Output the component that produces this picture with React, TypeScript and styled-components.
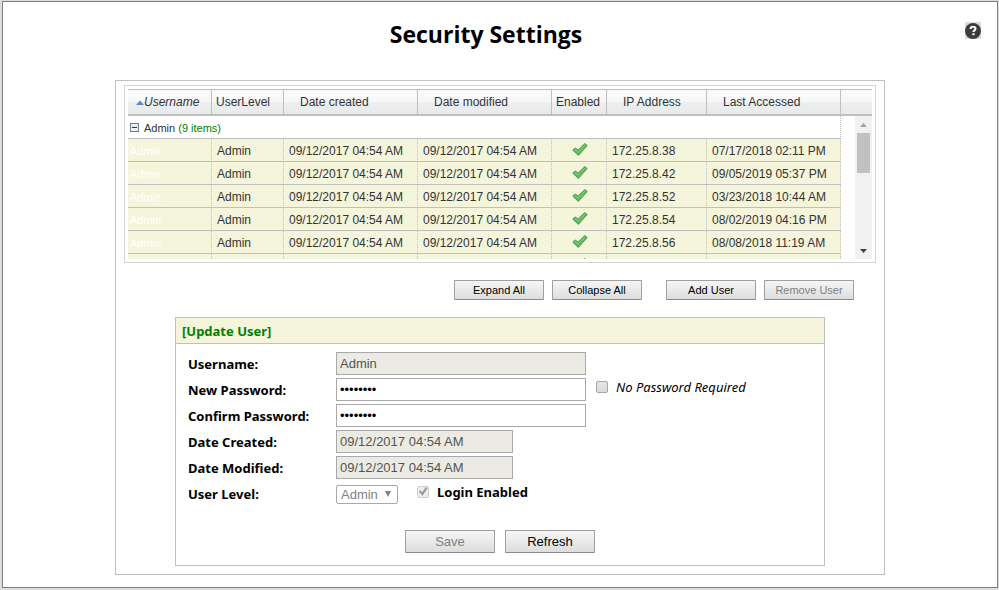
import React, { useState } from "react";
import styled, { createGlobalStyle, css } from "styled-components";

const GlobalStyle = createGlobalStyle`
  *, *::before, *::after { box-sizing: border-box; }
  body {
    margin: 0;
    background: #dddddd;
    color: #000000;
    font-family: "Noto Sans", "Open Sans", sans-serif;
  }
`;

const arial = `"Liberation Sans", Arial, sans-serif`;
const line = "#bfbfbf";

const Page = styled.div`
  padding: 1px 1px 2px 2px;
`;

const Frame = styled.main`
  display: flex;
  flex-direction: column;
  align-items: center;
  padding-bottom: 12px;
  border: 1px solid #7f7f7f;
  background: #ffffff;
`;

const TitleBar = styled.header`
  display: grid;
  grid-template-columns: 1fr auto 1fr;
  align-items: start;
  align-self: stretch;
  height: 78px;
  padding: 20px 16px 0 12px;
`;

const Title = styled.h1`
  grid-column: 2;
  margin: 0 24px 0 0;
  font-size: 23px;
  line-height: 25px;
  font-weight: 700;
  font-family: "Open Sans", "Noto Sans", sans-serif;
`;

const HelpButton = styled.button`
  justify-self: end;
  display: flex;
  padding: 0;
  border: 0;
  background: #dcdcdc;
  cursor: pointer;
`;

const Panel = styled.section`
  display: flex;
  flex-direction: column;
  width: 100%;
  max-width: 770px;
  padding: 4px 8px 8px;
  border: 1px solid ${line};
`;

const GridBox = styled.div`
  padding: 3px;
  border: 1px solid #d3d3d3;
`;

const GridTable = styled.table`
  width: 100%;
  table-layout: fixed;
  border-collapse: separate;
  border-spacing: 0;
  color: #333333;
  font-family: ${arial};
  font-size: 12px;
  line-height: 16px;
`;

const HeadCell = styled.th<{ $inset: number; $sorted?: boolean }>`
  height: 27px;
  padding: 0 0 0 ${(p) => p.$inset}px;
  border-top: 1px solid ${line};
  border-bottom: 2px solid ${line};
  border-right: 1px solid ${line};
  background: linear-gradient(#fafafa 0, #f7f7f8 48%, #edeef0 52%, #e9eaec 100%);
  font-weight: 400;
  font-style: ${(p) => (p.$sorted ? "italic" : "normal")};
  text-align: left;
  white-space: nowrap;
  &:last-child {
    border-right: 0;
  }
`;

const SortArrow = styled.svg`
  vertical-align: 1px;
`;

const GridBody = styled.div`
  display: flex;
  height: 143px;
`;

const Rows = styled.div`
  flex: 1;
  overflow: hidden;
`;

const GroupCell = styled.td`
  height: 23px;
  padding: 1px 2px 0;
  border-right: 1px dotted ${line};
  border-bottom: 1px solid ${line};
  font-size: 11px;
`;

const GroupLabel = styled.span`
  display: flex;
  align-items: center;
  gap: 5px;
`;

const GroupToggle = styled.button`
  display: flex;
  padding: 0;
  border: 0;
  background: none;
`;

const Count = styled.span`
  color: #008000;
`;

const Cell = styled.td<{ $kind?: "name" | "mark" }>`
  height: 23px;
  padding: 1px 0 0 5px;
  border-right: 1px dotted ${line};
  border-bottom: 1px solid ${line};
  background: #f5f5dc;
  white-space: nowrap;
  ${(p) =>
    p.$kind === "name" &&
    css`
      padding-left: 2px;
      color: #ffffff;
      font-size: 11px;
    `}
  ${(p) =>
    p.$kind === "mark" &&
    css`
      padding: 0 0 2px 2px;
      text-align: center;
    `}
`;

const CheckIcon = styled.svg`
  display: block;
  margin: 0 auto;
`;

const ScrollTrack = styled.div`
  display: grid;
  grid-template-rows: 17px 1fr 17px;
  width: 17px;
  background: #f1f1f1;
`;

const ScrollArrow = styled.svg`
  place-self: center;
`;

const ScrollThumb = styled.div`
  width: 13px;
  height: 40px;
  margin: 0 auto;
  background: #c1c1c1;
`;

const Actions = styled.div`
  display: flex;
  justify-content: flex-end;
  gap: 8px;
  margin: 17px 22px;
`;

const ActionGroup = styled.div`
  display: flex;
  gap: 8px;
  & + & {
    margin-left: 16px;
  }
`;

const Button = styled.button<{ $large?: boolean }>`
  width: 90px;
  height: ${(p) => (p.$large ? 23 : 20)}px;
  padding: 0;
  border: 1px solid #a0a0a0;
  border-bottom-color: #8c8c8c;
  border-radius: 1px;
  background: linear-gradient(#f6f6f6, #dddddd);
  color: #000000;
  font-family: ${arial};
  font-size: ${(p) => (p.$large ? 13 : 11)}px;
  &:disabled {
    color: #808080;
  }
`;

const UserForm = styled.form`
  width: 100%;
  max-width: 650px;
  align-self: center;
  border: 1px solid ${line};
`;

const FormTitle = styled.h2`
  margin: 0;
  padding: 2px 6px 0;
  border-bottom: 1px solid ${line};
  background: #f5f5dc;
  color: #008000;
  font-size: 13px;
  font-weight: 700;
  line-height: 23px;
`;

const Fields = styled.div`
  display: flex;
  flex-direction: column;
  gap: 3px;
  padding: 8px 12px 0;
`;

const FieldRow = styled.div`
  display: grid;
  grid-template-columns: 148px auto 1fr;
  grid-template-rows: 23px;
  align-items: center;
`;

const FieldLabel = styled.label`
  padding-top: 1px;
  font-size: 13px;
  font-weight: 700;
  line-height: 18px;
`;

const TextInput = styled.input<{ $short?: boolean }>`
  width: ${(p) => (p.$short ? 177 : 250)}px;
  height: 23px;
  padding: 0 3px 1px;
  border: 1px solid #a9a9a9;
  border-radius: 0;
  background: #ffffff;
  color: #000000;
  font-family: ${arial};
  font-size: 13px;
  &:disabled {
    background: #ebebe4;
    color: #545454;
  }
`;

const SelectBox = styled.span`
  display: grid;
  align-items: center;
  margin-top: 1px;
`;

const Select = styled.select`
  grid-area: 1 / 1;
  width: 62px;
  height: 19px;
  padding: 0 4px;
  appearance: none;
  border: 1px solid #a9a9a9;
  border-radius: 2px;
  background: #ffffff;
  color: #808080;
  font-family: ${arial};
  font-size: 13px;
  opacity: 1;
`;

const SelectArrow = styled.svg`
  grid-area: 1 / 1;
  justify-self: end;
  margin-right: 7px;
  pointer-events: none;
`;

const CheckLabel = styled.label<{ $strong?: boolean }>`
  display: flex;
  align-items: center;
  gap: 8px;
  padding-bottom: ${(p) => (p.$strong ? 4 : 6)}px;
  margin-left: ${(p) => (p.$strong ? 19 : 10)}px;
  font-size: 13px;
  font-weight: ${(p) => (p.$strong ? 700 : 400)};
  font-style: ${(p) => (p.$strong ? "normal" : "italic")};
  line-height: 18px;
`;

const CheckBox = styled.input`
  appearance: none;
  width: 12px;
  height: 12px;
  margin: 0;
  border: 1px solid #a6a6a6;
  border-radius: 2px;
  background: linear-gradient(#e6e6e6, #dadada);
  &:disabled {
    border-color: #cccccc;
    background: #ededed;
  }
  &:checked::before {
    content: "";
    display: block;
    width: 10px;
    height: 10px;
    background: #999999;
    clip-path: polygon(8% 52%, 26% 38%, 42% 58%, 78% 5%, 95% 18%, 46% 92%);
  }
`;

const FormActions = styled.div`
  display: flex;
  justify-content: center;
  gap: 10px;
  padding: 25px 0 12px;
`;

const widths = [84, 72, 134, 134, 55, 100, 134];

const created = "09/12/2017 04:54 AM";

const users = [
  { id: 1, name: "Admin", created, ip: "172.25.8.38", accessed: "07/17/2018 02:11 PM" },
  { id: 2, name: "Admin", created, ip: "172.25.8.42", accessed: "09/05/2019 05:37 PM" },
  { id: 3, name: "Admin", created, ip: "172.25.8.52", accessed: "03/23/2018 10:44 AM" },
  { id: 4, name: "Admin", created, ip: "172.25.8.54", accessed: "08/02/2019 04:16 PM" },
  { id: 5, name: "Admin", created, ip: "172.25.8.56", accessed: "08/08/2018 11:19 AM" },
  { id: 6, name: "", created: "", ip: "", accessed: "" },
];

const Columns = () => (
  <colgroup>
    {widths.map((w, i) => (
      <col key={i} width={w} />
    ))}
    <col />
  </colgroup>
);

const Check = () => (
  <CheckIcon width="16" height="13" viewBox="0 0 16 13" role="img" aria-label="Enabled">
    <path
      d="M.8 7.2 3.1 4.9l3 2.2L12.8.6l2.4 1.9-8.8 9.9z"
      fill="#62bb5e"
      stroke="#4b9c4b"
      strokeWidth="1"
      strokeLinejoin="round"
    />
    <path d="M3 6.4 6.3 8.8 13 2" fill="none" stroke="#84cf7e" strokeWidth="1" />
  </CheckIcon>
);

export default function App() {
  const [password, setPassword] = useState("password");
  const [confirm, setConfirm] = useState("password");

  return (
    <>
      <GlobalStyle />
      <Page>
        <Frame>
          <TitleBar>
            <Title>Security Settings</Title>
            <HelpButton type="button" aria-label="Help">
              <svg width="16" height="17" viewBox="0 0 16 17">
                <circle cx="8" cy="9" r="8" fill="#3c3c3c" />
                <path
                  d="M5.6 7C5.6 5.4 6.6 4.8 8 4.8s2.5.7 2.5 2c0 1.6-2.1 1.6-2.1 3.3"
                  fill="none"
                  stroke="#ffffff"
                  strokeWidth="2"
                />
                <rect x="7.4" y="11.2" width="2.1" height="2" fill="#ffffff" />
              </svg>
            </HelpButton>
          </TitleBar>

          <Panel>
            <GridBox>
              <GridTable>
                <Columns />
                <thead>
                  <tr>
                    <HeadCell $inset={8} $sorted aria-sort="ascending">
                      <SortArrow width="8" height="5" viewBox="0 0 8 5">
                        <path d="M0 5 4 0.5 8 5z" fill="#5b87cf" />
                      </SortArrow>
                      Username
                    </HeadCell>
                    <HeadCell $inset={4}>UserLevel</HeadCell>
                    <HeadCell $inset={16}>Date created</HeadCell>
                    <HeadCell $inset={16}>Date modified</HeadCell>
                    <HeadCell $inset={4}>Enabled</HeadCell>
                    <HeadCell $inset={16}>IP Address</HeadCell>
                    <HeadCell $inset={16}>Last Accessed</HeadCell>
                    <HeadCell as="td" $inset={0} />
                  </tr>
                </thead>
              </GridTable>
              <GridBody>
                <Rows>
                  <GridTable aria-label="Users">
                    <Columns />
                    <tbody>
                      <tr>
                        <GroupCell colSpan={7}>
                          <GroupLabel>
                            <GroupToggle type="button" aria-label="Collapse group">
                              <svg width="9" height="9" viewBox="0 0 9 9">
                                <rect x="0.5" y="0.5" width="8" height="8" fill="#e4f4f8" stroke="#6f7f86" />
                                <path d="M2 4.5h5" stroke="#123a66" />
                              </svg>
                            </GroupToggle>
                            <span>
                              Admin <Count>(9 items)</Count>
                            </span>
                          </GroupLabel>
                        </GroupCell>
                        <td />
                      </tr>
                      {users.map((u) => (
                        <tr key={u.id}>
                          <Cell $kind="name">{u.name}</Cell>
                          <Cell>{u.name}</Cell>
                          <Cell>{u.created}</Cell>
                          <Cell>{u.created}</Cell>
                          <Cell $kind="mark">
                            <Check />
                          </Cell>
                          <Cell>{u.ip}</Cell>
                          <Cell>{u.accessed}</Cell>
                          <td />
                        </tr>
                      ))}
                    </tbody>
                  </GridTable>
                </Rows>
                <ScrollTrack>
                  <ScrollArrow width="7" height="4" viewBox="0 0 7 4">
                    <path d="M0 4 3.5 0 7 4z" fill="#a3a3a3" />
                  </ScrollArrow>
                  <ScrollThumb />
                  <ScrollArrow width="7" height="4" viewBox="0 0 7 4">
                    <path d="M0 0h7L3.5 4z" fill="#404040" />
                  </ScrollArrow>
                </ScrollTrack>
              </GridBody>
            </GridBox>

            <Actions>
              <ActionGroup>
                <Button type="button">Expand All</Button>
                <Button type="button">Collapse All</Button>
              </ActionGroup>
              <ActionGroup>
                <Button type="button">Add User</Button>
                <Button type="button" disabled>
                  Remove User
                </Button>
              </ActionGroup>
            </Actions>

            <UserForm onSubmit={(e) => e.preventDefault()}>
              <FormTitle>[Update User]</FormTitle>
              <Fields>
                <FieldRow>
                  <FieldLabel htmlFor="username">Username:</FieldLabel>
                  <TextInput id="username" defaultValue="Admin" disabled />
                </FieldRow>
                <FieldRow>
                  <FieldLabel htmlFor="new-password">New Password:</FieldLabel>
                  <TextInput
                    id="new-password"
                    type="password"
                    value={password}
                    onChange={(e) => setPassword(e.target.value)}
                  />
                  <CheckLabel>
                    <CheckBox type="checkbox" />
                    No Password Required
                  </CheckLabel>
                </FieldRow>
                <FieldRow>
                  <FieldLabel htmlFor="confirm-password">Confirm Password:</FieldLabel>
                  <TextInput
                    id="confirm-password"
                    type="password"
                    value={confirm}
                    onChange={(e) => setConfirm(e.target.value)}
                  />
                </FieldRow>
                <FieldRow>
                  <FieldLabel htmlFor="created">Date Created:</FieldLabel>
                  <TextInput id="created" $short defaultValue={created} disabled />
                </FieldRow>
                <FieldRow>
                  <FieldLabel htmlFor="modified">Date Modified:</FieldLabel>
                  <TextInput id="modified" $short defaultValue={created} disabled />
                </FieldRow>
                <FieldRow>
                  <FieldLabel htmlFor="level">User Level:</FieldLabel>
                  <SelectBox>
                    <Select id="level" disabled defaultValue="Admin">
                      <option>Admin</option>
                    </Select>
                    <SelectArrow width="6" height="6" viewBox="0 0 6 6">
                      <path d="M0 0h6L3 6z" fill="#808080" />
                    </SelectArrow>
                  </SelectBox>
                  <CheckLabel $strong>
                    <CheckBox type="checkbox" defaultChecked disabled />
                    Login Enabled
                  </CheckLabel>
                </FieldRow>
              </Fields>
              <FormActions>
                <Button type="submit" $large disabled>
                  Save
                </Button>
                <Button type="button" $large>
                  Refresh
                </Button>
              </FormActions>
            </UserForm>
          </Panel>
        </Frame>
      </Page>
    </>
  );
}
